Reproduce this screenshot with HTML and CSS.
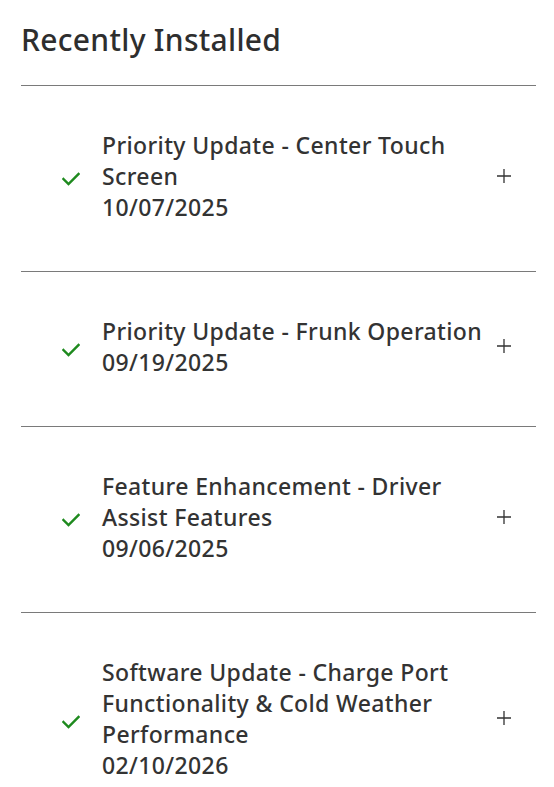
FILE: index.html
```html
<!DOCTYPE html>
<html lang="en">
<head>
<meta charset="utf-8">
<link rel="stylesheet" href="styles.css">
</head>
<body>
<main class="panel">
  <h1 class="title">Recently Installed</h1>
  <ul class="list">
    <li class="item">
      <svg class="check" viewBox="0 0 18 14" aria-hidden="true"><polyline points="1.5,7 6.5,12 16.5,2"/></svg>
      <div class="text">
        <div class="name">Priority Update - Center Touch Screen</div>
        <div class="date">10/07/2025</div>
      </div>
      <svg class="plus" viewBox="0 0 16 16" aria-hidden="true"><path d="M8 1v14M1 8h14"/></svg>
    </li>
    <li class="item">
      <svg class="check" viewBox="0 0 18 14" aria-hidden="true"><polyline points="1.5,7 6.5,12 16.5,2"/></svg>
      <div class="text">
        <div class="name">Priority Update - Frunk Operation</div>
        <div class="date">09/19/2025</div>
      </div>
      <svg class="plus" viewBox="0 0 16 16" aria-hidden="true"><path d="M8 1v14M1 8h14"/></svg>
    </li>
    <li class="item">
      <svg class="check" viewBox="0 0 18 14" aria-hidden="true"><polyline points="1.5,7 6.5,12 16.5,2"/></svg>
      <div class="text">
        <div class="name">Feature Enhancement - Driver Assist Features</div>
        <div class="date">09/06/2025</div>
      </div>
      <svg class="plus" viewBox="0 0 16 16" aria-hidden="true"><path d="M8 1v14M1 8h14"/></svg>
    </li>
    <li class="item">
      <svg class="check" viewBox="0 0 18 14" aria-hidden="true"><polyline points="1.5,7 6.5,12 16.5,2"/></svg>
      <div class="text">
        <div class="name">Software Update - Charge Port Functionality &amp; Cold Weather Performance</div>
        <div class="date">02/10/2026</div>
      </div>
      <svg class="plus" viewBox="0 0 16 16" aria-hidden="true"><path d="M8 1v14M1 8h14"/></svg>
    </li>
  </ul>
</main>
</body>
</html>
```

FILE: styles.css
```css
html, body {
  margin: 0;
  padding: 0;
  background: #ffffff;
}
body {
  font-family: "Noto Sans", "Open Sans", sans-serif;
  color: #333333;
}
.panel {
  width: 515px;
  padding: 0 0 0 21px;
}
.title {
  margin: 0;
  padding: 20px 0 25px;
  font-size: 30px;
  line-height: 40px;
  font-weight: 500;
  letter-spacing: 0.3px;
  color: #2e2e2e;
  border-bottom: 1px solid #7a7a7a;
}
.list {
  list-style: none;
  margin: 0;
  padding: 0;
}
.item {
  display: flex;
  align-items: center;
  padding: 44px 0 48px;
  border-bottom: 1px solid #7a7a7a;
}
.check {
  flex: none;
  width: 18px;
  height: 14px;
  margin-left: 41px;
  margin-right: 22px;
  margin-top: 5px;
  fill: none;
  stroke: #1e8a1e;
  stroke-width: 2.4;
  stroke-linecap: square;
}
.text {
  flex: 1;
  font-size: 23px;
  line-height: 31px;
  font-weight: 500;
  letter-spacing: 0.37px;
  color: #333333;
  padding-right: 10px;
}
.plus {
  flex: none;
  width: 16px;
  height: 16px;
  margin-right: 24px;
  margin-top: -2px;
  fill: none;
  stroke: #333333;
  stroke-width: 1.3;
}
```
